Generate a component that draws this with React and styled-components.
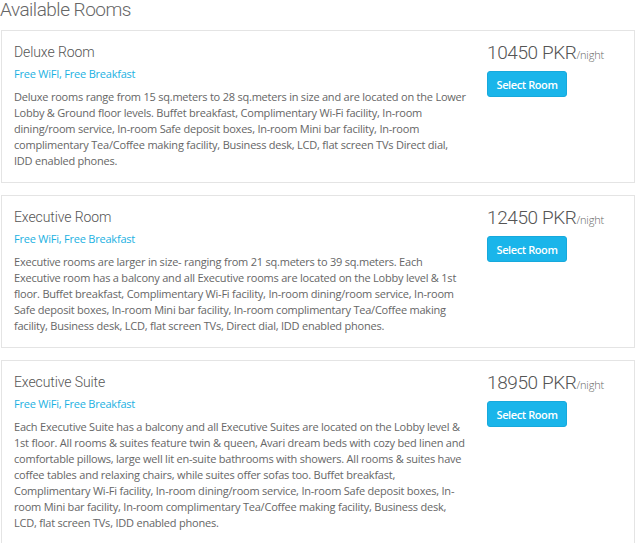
import React from "react";
import styled, { createGlobalStyle } from "styled-components";

const rooms = [
  {
    name: "Deluxe Room",
    perks: "Free WiFI, Free Breakfast",
    price: "10450",
    text:
      "Deluxe rooms range from 15 sq.meters to 28 sq.meters in size and are located on the Lower Lobby & Ground floor levels. Buffet breakfast, Complimentary Wi-Fi facility, In-room dining/room service, In-room Safe deposit boxes, In-room Mini bar facility, In-room complimentary Tea/Coffee making facility, Business desk, LCD, flat screen TVs Direct dial, IDD enabled phones.",
  },
  {
    name: "Executive Room",
    perks: "Free WiFi, Free Breakfast",
    price: "12450",
    text:
      "Executive rooms are larger in size- ranging from 21 sq.meters to 39 sq.meters. Each Executive room has a balcony and all Executive rooms are located on the Lobby level & 1st floor. Buffet breakfast, Complimentary Wi-Fi facility, In-room dining/room service, In-room Safe deposit boxes, In-room Mini bar facility, In-room complimentary Tea/Coffee making facility, Business desk, LCD, flat screen TVs, Direct dial, IDD enabled phones.",
  },
  {
    name: "Executive Suite",
    perks: "Free WiFi, Free Breakfast",
    price: "18950",
    text:
      "Each Executive Suite has a balcony and all Executive Suites are located on the Lobby level & 1st floor. All rooms & suites feature twin & queen, Avari dream beds with cozy bed linen and comfortable pillows, large well lit en-suite bathrooms with showers. All rooms & suites have coffee tables and relaxing chairs, while suites offer sofas too. Buffet breakfast, Complimentary Wi-Fi facility, In-room dining/room service, In-room Safe deposit boxes, In-room Mini bar facility, In-room complimentary Tea/Coffee making facility, Business desk, LCD, flat screen TVs, IDD enabled phones.",
  },
];

const App = () => {
  return (
    <>
      <GlobalStyle />
      <Page>
        <Heading>Available Rooms</Heading>
        <List>
          {rooms.map((room) => (
            <Card key={room.name}>
              <Info>
                <RoomName>{room.name}</RoomName>
                <Perks>{room.perks}</Perks>
                <Description>{room.text}</Description>
              </Info>
              <Side>
                <Price>
                  {room.price} PKR<Per>/night</Per>
                </Price>
                <SelectButton>Select Room</SelectButton>
              </Side>
            </Card>
          ))}
        </List>
      </Page>
    </>
  );
};

export default App;

const GlobalStyle = createGlobalStyle`
  body {
    margin: 0;
    background: #fff;
    font-family: "Open Sans", sans-serif;
  }
`;

const Page = styled.div`
  width: 641px;
  padding: 0 6px 0 1px;
  box-sizing: border-box;
`;

const Heading = styled.h2`
  margin: 0 0 0 -1px;
  height: 30px;
  font-family: Roboto, sans-serif;
  font-weight: 300;
  font-size: 19px;
  letter-spacing: -0.5px;
  line-height: 20px;
  color: #666;
`;

const List = styled.div`
  display: flex;
  flex-direction: column;
  gap: 12px;
`;

const Card = styled.div`
  display: grid;
  grid-template-columns: 452px 1fr;
  column-gap: 21px;
  border: 1px solid #e4e4e4;
  padding: 10px 12px 13px 12px;
`;

const Info = styled.div`
  display: flex;
  flex-direction: column;
`;

const RoomName = styled.div`
  font-family: Roboto, sans-serif;
  font-weight: 300;
  font-size: 14px;
  letter-spacing: -0.1px;
  line-height: 22px;
  color: #555;
`;

const Perks = styled.div`
  margin-top: 4px;
  font-size: 11px;
  letter-spacing: -0.22px;
  line-height: 14px;
  color: #1ab1e2;
`;

const Description = styled.p`
  margin: 8px 0 0;
  font-size: 11px;
  letter-spacing: -0.22px;
  line-height: 16px;
  color: #666;
`;

const Side = styled.div`
  display: flex;
  flex-direction: column;
  align-items: flex-start;
`;

const Price = styled.div`
  font-family: Roboto, sans-serif;
  font-weight: 300;
  font-size: 19px;
  letter-spacing: -0.4px;
  line-height: 24px;
  color: #555;
`;

const Per = styled.span`
  font-family: "Open Sans", sans-serif;
  font-size: 11px;
  letter-spacing: -0.2px;
  color: #666;
`;

const SelectButton = styled.button`
  margin-top: 4px;
  width: 80px;
  height: 26px;
  border: 1px solid #17a9dc;
  border-radius: 3px;
  background: #1ab5ea;
  color: #fff;
  font-family: "Open Sans", sans-serif;
  font-weight: 600;
  font-size: 11px;
  letter-spacing: -0.4px;
  padding: 0;
  cursor: pointer;
`;
